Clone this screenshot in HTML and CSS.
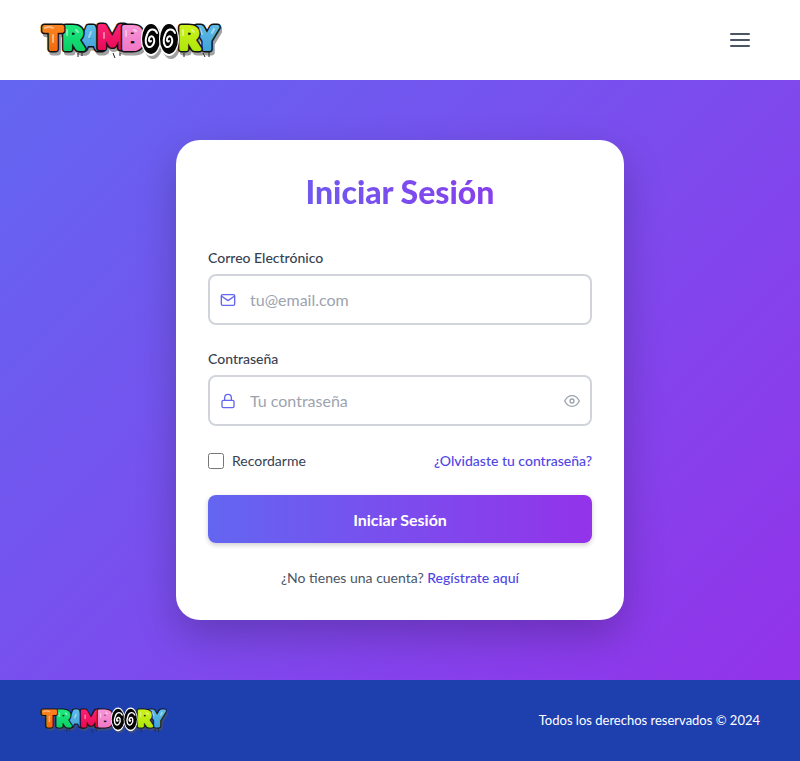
FILE: index.html
```
<!DOCTYPE html>
<html lang="es">
<head>
<meta charset="utf-8">
<meta name="viewport" content="width=device-width, initial-scale=1">
<title>Iniciar Sesión</title>
<link rel="stylesheet" href="styles.css">
</head>
<body>
<svg class="defs" aria-hidden="true">
  <defs>
    <linearGradient id="orange" x2="0" y2="1"><stop stop-color="#ff8a24"/><stop offset="1" stop-color="#f0650a"/></linearGradient>
    <linearGradient id="green" x2="0" y2="1"><stop stop-color="#22ef83"/><stop offset="1" stop-color="#08c964"/></linearGradient>
    <linearGradient id="blue" x2="0" y2="1"><stop stop-color="#66c2ec"/><stop offset="1" stop-color="#3d9ed4"/></linearGradient>
    <linearGradient id="red" x2="0" y2="1"><stop stop-color="#ff2a80"/><stop offset="1" stop-color="#e3044f"/></linearGradient>
    <linearGradient id="pink" x2="0" y2="1"><stop stop-color="#fa9ddd"/><stop offset="1" stop-color="#ee72c2"/></linearGradient>
    <linearGradient id="lime" x2="0" y2="1"><stop stop-color="#d3f51f"/><stop offset="1" stop-color="#a8e409"/></linearGradient>
    <g id="swirl">
      <ellipse rx="10" ry="17" fill="#fff"/>
      <ellipse rx="9" ry="15" fill="#050505"/>
      <path d="M0 2c-2 2-3-2-1-4 4-3 6 5 2 9-5 4-8-4-5-11C-2-11 4-11 6-6" fill="none" stroke="#fff" stroke-width="2" stroke-linecap="round"/>
    </g>
    <symbol id="logo" viewBox="0 0 182 40">
      <g class="logo-shade" transform="translate(2 3)">
        <text x="13" y="29">T</text><text x="33" y="29">R</text><text x="51" y="29">A</text><text class="wide" x="72" y="28">M</text><text x="92" y="29">B</text>
        <ellipse cx="111" cy="19" rx="10" ry="17"/><ellipse cx="129" cy="19" rx="10" ry="17"/>
        <text x="149" y="29">R</text><text x="167" y="29">Y</text>
      </g>
      <path d="M38 33v4M42 33v3M73 33l2 5M80 33v3M144 33v4M163 33l2 4M169 32v5" stroke="#222" stroke-width="1"/>
      <g class="logo-letters">
        <text class="edge" x="51" y="29">A</text>
        <text x="51" y="29" fill="url(#blue)" stroke="url(#blue)">A</text>
        <text class="edge" x="33" y="29">R</text>
        <text x="33" y="29" fill="url(#green)" stroke="url(#green)">R</text>
        <text class="edge" x="13" y="29">T</text>
        <text x="13" y="29" fill="url(#orange)" stroke="url(#orange)">T</text>
        <text class="edge wide" x="72" y="28">M</text>
        <text class="wide" x="72" y="28" fill="url(#red)" stroke="url(#red)">M</text>
        <text class="edge" x="92" y="29">B</text>
        <text x="92" y="29" fill="url(#pink)" stroke="url(#pink)">B</text>
        <text class="edge" x="167" y="29">Y</text>
        <text x="167" y="29" fill="url(#blue)" stroke="url(#blue)">Y</text>
        <text class="edge" x="149" y="29">R</text>
        <text x="149" y="29" fill="url(#lime)" stroke="url(#lime)">R</text>
      </g>
      <path d="M5 8q4-2 8 0M13 15v7M27 10v5M36 10l2 2M51 12l-2 5M64 13v5M86 11v5M94 10l2 1M143 10v5M152 10l2 2M160 9l2 5M174 9l-2 4" fill="none" stroke="#fff" stroke-opacity=".45" stroke-width="2" stroke-linecap="round"/>
      <use href="#swirl" x="111" y="19"/>
      <use href="#swirl" x="129" y="19"/>
    </symbol>
  </defs>
</svg>

<header class="bar header">
  <a class="brand" href="#" aria-label="Tramboory"><svg class="logo" aria-hidden="true"><use href="#logo"/></svg></a>
  <button class="menu" type="button" aria-label="Abrir menú">
    <svg width="24" height="24" viewBox="0 0 24 24" fill="none" stroke="currentColor" stroke-width="2" stroke-linecap="round"><path d="M3 6h18M3 12h18M3 18h18"/></svg>
  </button>
</header>

<main class="main">
  <form class="card">
    <h1 class="title">Iniciar Sesión</h1>
    <div class="field">
      <label class="label" for="email">Correo Electrónico</label>
      <div class="control">
        <svg class="icon" viewBox="0 0 24 24"><path d="M4 4h16c1.1 0 2 .9 2 2v12c0 1.1-.9 2-2 2H4c-1.1 0-2-.9-2-2V6c0-1.1.9-2 2-2z"/><path d="m22 6-10 7L2 6"/></svg>
        <input class="input" id="email" type="email" placeholder="tu@email.com">
      </div>
    </div>
    <div class="field">
      <label class="label" for="password">Contraseña</label>
      <div class="control">
        <svg class="icon" viewBox="0 0 24 24"><rect x="3" y="11" width="18" height="11" rx="2"/><path d="M7 11V7a5 5 0 0 1 10 0v4"/></svg>
        <input class="input" id="password" type="password" placeholder="Tu contraseña">
        <button class="reveal" type="button" aria-label="Mostrar contraseña">
          <svg class="icon" viewBox="0 0 24 24"><path d="M1 12s4-8 11-8 11 8 11 8-4 8-11 8-11-8-11-8z"/><circle cx="12" cy="12" r="3"/></svg>
        </button>
      </div>
    </div>
    <div class="options">
      <label class="remember"><input class="check" type="checkbox">Recordarme</label>
      <a class="link" href="#">¿Olvidaste tu contraseña?</a>
    </div>
    <button class="submit" type="submit">Iniciar Sesión</button>
    <p class="signup">¿No tienes una cuenta? <a class="link" href="#">Regístrate aquí</a></p>
  </form>
</main>

<footer class="bar footer">
  <svg class="logo logo-small" role="img" aria-label="Tramboory"><use href="#logo"/></svg>
  <p class="rights">Todos los derechos reservados © 2024</p>
</footer>
</body>
</html>
```
FILE: styles.css
```
* {
  box-sizing: border-box;
}

body {
  margin: 0;
  min-height: 100vh;
  display: flex;
  flex-direction: column;
  font-family: Lato, "Open Sans", sans-serif;
  font-size: 14px;
  line-height: 21px;
  color: #374151;
}

button,
input {
  font: inherit;
}

p,
h1 {
  margin: 0;
}

.defs {
  position: absolute;
  width: 0;
  height: 0;
}

.bar {
  display: flex;
  align-items: center;
  justify-content: space-between;
  padding: 20px 40px;
}

.header {
  background: #fff;
}

.brand {
  display: flex;
}

.logo {
  display: block;
  width: 182px;
  height: 40px;
}

.logo-small {
  width: 128px;
  height: 28px;
}

.logo-shade,
.logo-letters {
  font-family: Lato, sans-serif;
  font-size: 31px;
  font-weight: 900;
  text-anchor: middle;
  stroke-linejoin: round;
  stroke-linecap: round;
}

.logo-shade {
  fill: #555;
  opacity: 0.55;
}

.logo-shade text {
  stroke: #555;
  stroke-width: 7px;
}

.logo-letters {
  stroke-width: 4px;
}

.logo-letters .edge {
  fill: #111;
  stroke: #111;
  stroke-width: 7px;
}

.logo .wide {
  font-size: 26px;
}

.menu {
  display: flex;
  padding: 8px;
  border: 0;
  background: none;
  color: #4b5563;
}

.main {
  flex: 1;
  display: flex;
  align-items: center;
  justify-content: center;
  padding: 60px 16px;
  background: linear-gradient(135deg, #6366f1, #9333ea);
}

.card {
  width: 100%;
  max-width: 448px;
  padding: 32px;
  display: flex;
  flex-direction: column;
  gap: 24px;
  border-radius: 24px;
  background: #fff;
  box-shadow: 0 16px 40px rgba(0, 0, 0, 0.22);
}

.title {
  margin-bottom: 12px;
  font-size: 32px;
  line-height: 40px;
  font-weight: 900;
  text-align: center;
  color: transparent;
  background: linear-gradient(to right, #6366f1, #9333ea);
  background-clip: text;
}

.field {
  display: flex;
  flex-direction: column;
  gap: 6px;
}

.label {
  line-height: 20px;
  font-weight: 500;
}

.control {
  display: flex;
  align-items: center;
  gap: 14px;
  height: 51px;
  padding: 0 10px;
  border: 2px solid #d1d5db;
  border-radius: 8px;
}

.icon {
  flex: none;
  display: block;
  width: 16px;
  height: 16px;
  fill: none;
  stroke: currentColor;
  stroke-width: 2;
  stroke-linecap: round;
  stroke-linejoin: round;
  color: #6366f1;
}

.input {
  flex: 1;
  min-width: 0;
  padding: 0;
  border: 0;
  outline: 0;
  background: none;
  font-size: 16px;
}

.input::placeholder {
  color: #9ca3af;
  opacity: 1;
}

.reveal {
  padding: 0;
  border: 0;
  background: none;
}

.reveal .icon {
  color: #9ca3af;
}

.options {
  display: flex;
  align-items: center;
  justify-content: space-between;
}

.remember {
  display: flex;
  align-items: center;
  gap: 8px;
}

.check {
  width: 16px;
  height: 16px;
  margin: 0;
}

.link {
  color: #4f46e5;
  font-weight: 500;
  text-decoration: none;
}

.submit {
  height: 48px;
  border: 0;
  border-radius: 8px;
  background: linear-gradient(to right, #6366f1, #9333ea);
  box-shadow: 0 2px 5px rgba(0, 0, 0, 0.2);
  color: #fff;
  font-size: 16px;
  font-weight: 700;
}

.signup {
  text-align: center;
  color: #4b5563;
}

.footer {
  padding: 26px 40px 27px;
  background: #1e40af;
  color: #fff;
}

.rights {
  font-size: 13px;
}
```
